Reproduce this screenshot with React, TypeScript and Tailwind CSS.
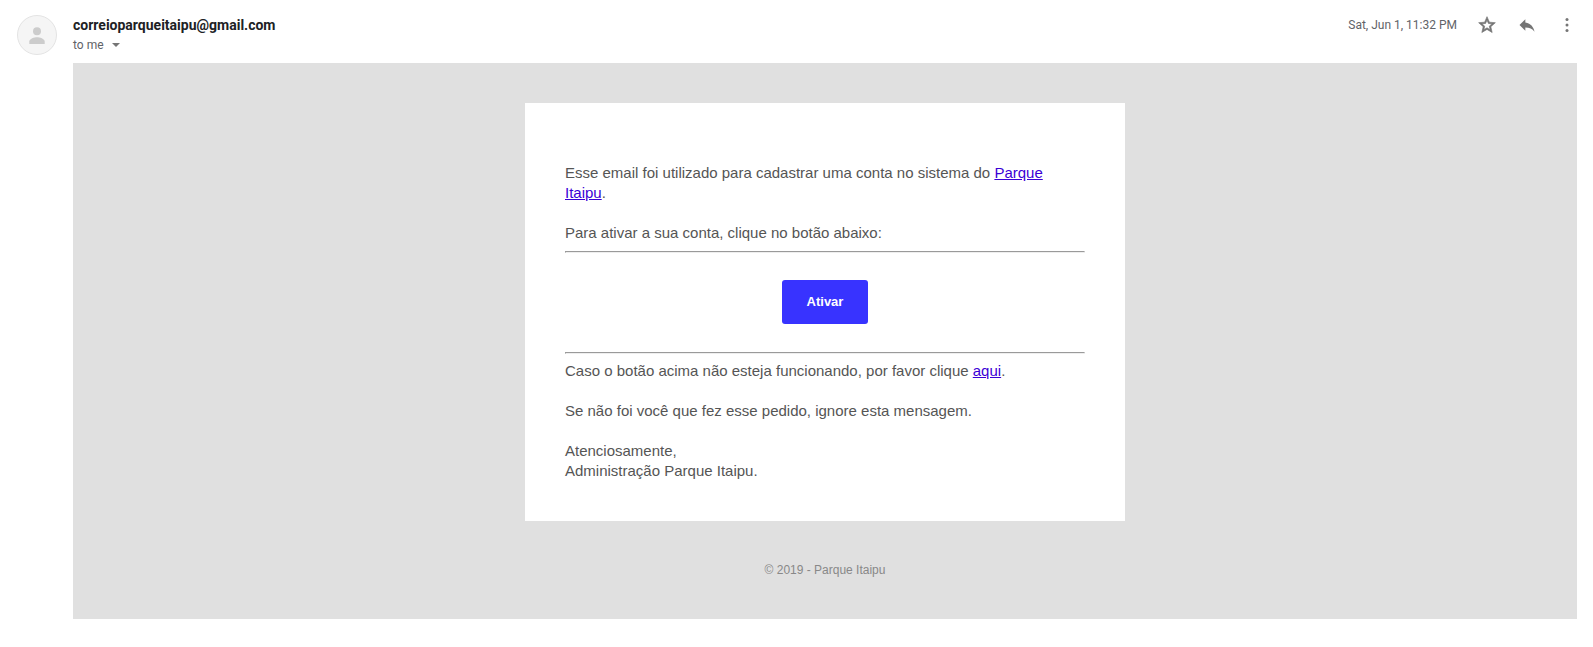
import type { ReactNode } from 'react';

function Avatar() {
  return (
    <svg viewBox="0 0 40 40" className="size-10 shrink-0" role="img" aria-label="Sender">
      <circle cx="20" cy="20" r="19.5" fill="#f5f5f5" stroke="#e3e3e3" />
      <circle cx="20" cy="16.2" r="4" fill="#cccccc" />
      <path
        d="M12.3 29v-2.4c0-2.8 5.1-4.3 7.7-4.3s7.7 1.5 7.7 4.3V29z"
        fill="#cccccc"
      />
    </svg>
  );
}

function IconButton({ label, children }: { label: string; children: ReactNode }) {
  return (
    <button type="button" aria-label={label} className="size-5 cursor-pointer text-[#757575]">
      <svg viewBox="0 0 24 24" fill="currentColor" className="size-5">
        {children}
      </svg>
    </button>
  );
}

function MessageHeader() {
  return (
    <div className="flex items-start justify-between">
      <div className="font-[Roboto,sans-serif]">
        <h3 className="text-sm leading-5 font-bold text-[#202124]">
          correioparqueitaipu@gmail.com
        </h3>
        <button
          type="button"
          className="flex cursor-pointer items-center gap-2 text-xs leading-5 text-[#5f6368]"
        >
          to me
          <svg viewBox="0 0 8 4" className="h-1 w-2" fill="#757575" aria-hidden="true">
            <path d="M0 0h8L4 4z" />
          </svg>
        </button>
      </div>
      <div className="flex items-center gap-5">
        <time className="font-[Roboto,sans-serif] text-xs leading-5 text-[#5f6368]">
          Sat, Jun 1, 11:32 PM
        </time>
        <IconButton label="Star">
          <path
            d="M22 9.24l-7.19-.62L12 2 9.19 8.63 2 9.24l5.46 4.73L5.82 21 12 17.27 18.18 21l-1.63-7.03L22 9.24zM12 15.4l-3.76 2.27 1-4.28-3.32-2.88 4.38-.38L12 6.1l1.71 4.04 4.38.38-3.32 2.88 1 4.28L12 15.4z"
            stroke="currentColor"
            strokeWidth="0.8"
          />
        </IconButton>
        <IconButton label="Reply">
          <path d="M10 9V5l-7 7 7 7v-4.1c5 0 8.5 1.6 11 5.1-1-5-4-10-11-11z" />
        </IconButton>
        <IconButton label="More">
          <circle cx="12" cy="5.4" r="1.8" />
          <circle cx="12" cy="12" r="1.8" />
          <circle cx="12" cy="18.6" r="1.8" />
        </IconButton>
      </div>
    </div>
  );
}

function Rule() {
  return (
    <hr className="mt-2 mb-[7px] border border-t-[#9a9a9a] border-r-[#eeeeee] border-b-[#eeeeee] border-l-[#9a9a9a]" />
  );
}

function TextLink({ children }: { children: ReactNode }) {
  return (
    <a href="#" className="text-[#3b00d6] underline">
      {children}
    </a>
  );
}

function MessageBody() {
  return (
    <div className="bg-[#e0e0e0] px-4 py-10 font-['Liberation_Sans',Arial,sans-serif]">
      <div className="mx-auto max-w-[600px] bg-white px-10 pt-15 pb-10 text-[15px] leading-5 text-[#555555]">
        <p className="mb-5">
          Esse email foi utilizado para cadastrar uma conta no sistema do{' '}
          <TextLink>Parque Itaipu</TextLink>.
        </p>
        <p>Para ativar a sua conta, clique no botão abaixo:</p>
        <Rule />
        <div className="flex justify-center py-5">
          <a
            href="#"
            className="rounded-[3px] bg-[#3833ff] px-[25px] py-3 text-[13px] leading-5 font-bold text-white"
          >
            Ativar
          </a>
        </div>
        <Rule />
        <p className="mb-5">
          Caso o botão acima não esteja funcionando, por favor clique <TextLink>aqui</TextLink>.
        </p>
        <p className="mb-5">Se não foi você que fez esse pedido, ignore esta mensagem.</p>
        <p>
          Atenciosamente,
          <br />
          Administração Parque Itaipu.
        </p>
      </div>
      <p className="pt-10 text-center text-xs leading-[18px] text-[#888888]">
        © 2019 - Parque Itaipu
      </p>
    </div>
  );
}

export default function App() {
  return (
    <main className="flex min-h-screen items-start gap-4 bg-white pt-[15px] pr-4 pb-7 pl-[17px]">
      <Avatar />
      <article className="flex min-w-0 flex-1 flex-col gap-2">
        <MessageHeader />
        <MessageBody />
      </article>
    </main>
  );
}
